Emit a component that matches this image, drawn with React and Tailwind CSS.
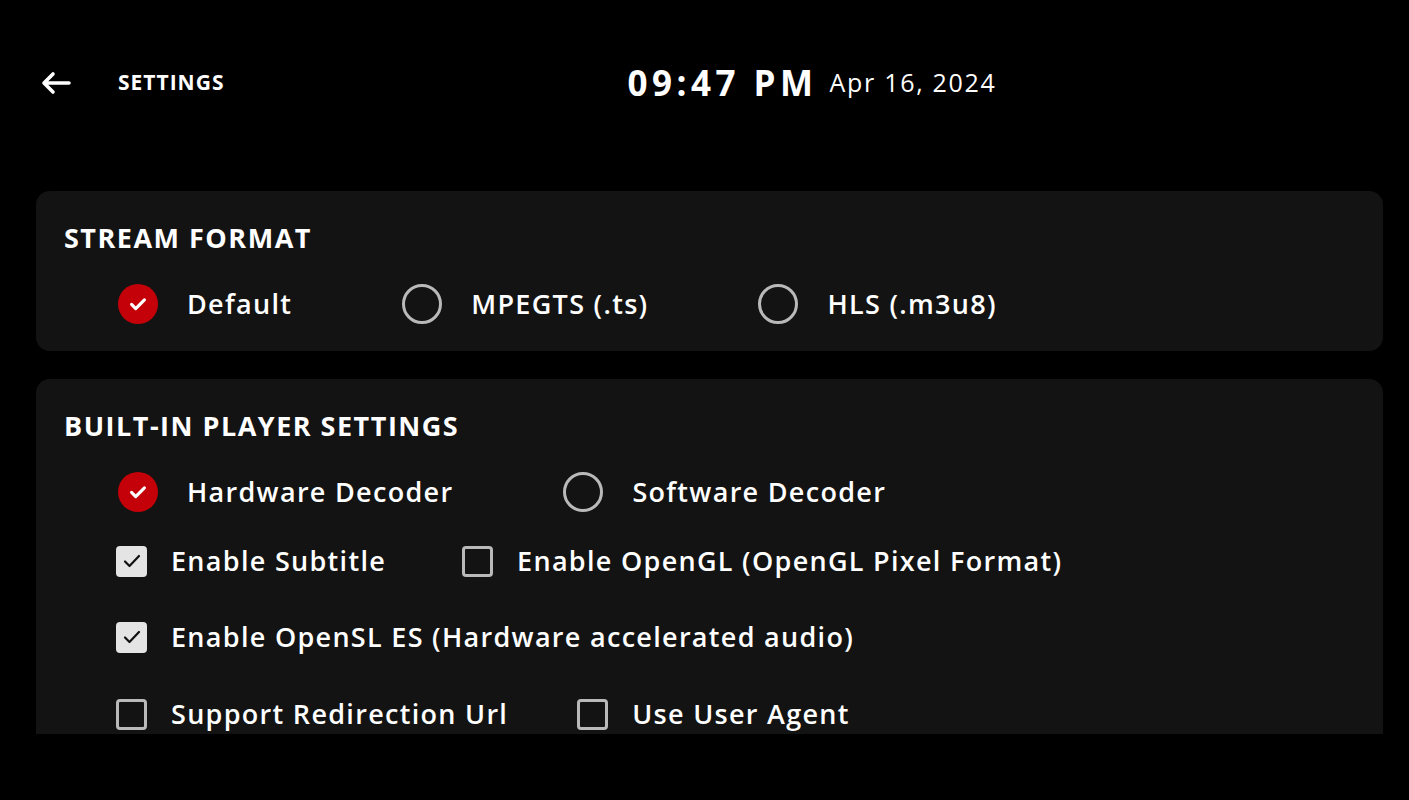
import React from 'react';

const font = { fontFamily: '"Open Sans", "Liberation Sans", sans-serif' };

const RadioOn = () => (
  <span className="flex h-10 w-10 items-center justify-center rounded-full bg-[#c40008]">
    <svg width="22" height="22" viewBox="0 0 24 24" fill="none" stroke="white" strokeWidth="3.4" strokeLinecap="round" strokeLinejoin="round">
      <path d="M5 12.5l4.5 4.5L19 7.5" />
    </svg>
  </span>
);

const RadioOff = () => (
  <span className="block h-10 w-10 rounded-full border-[3px] border-[#b9b9b9]" />
);

const CheckOn = () => (
  <span className="flex h-[31px] w-[31px] items-center justify-center rounded-[4px] bg-[#e4e4e4]">
    <svg width="24" height="24" viewBox="0 0 24 24" fill="none" stroke="#111" strokeWidth="2.2" strokeLinecap="round" strokeLinejoin="round">
      <path d="M5 12.5l4.5 4.5L19 7" />
    </svg>
  </span>
);

const CheckOff = () => (
  <span className="block h-[31px] w-[31px] rounded-[4px] border-[3px] border-[#b9b9b9]" />
);

const Radio = ({ on, label }) => (
  <div className="flex h-10 items-center">
    {on ? <RadioOn /> : <RadioOff />}
    <span className="ml-[29px] text-[27px] font-semibold leading-[34px] tracking-[1.3px] text-white">{label}</span>
  </div>
);

const Check = ({ on, label }) => (
  <div className="flex h-[34px] items-center">
    {on ? <CheckOn /> : <CheckOff />}
    <span className="ml-[24px] text-[27px] font-semibold leading-[34px] tracking-[1.3px] text-white">{label}</span>
  </div>
);

export default function App() {
  return (
    <div className="h-[800px] w-full overflow-hidden bg-black text-white" style={font}>
      {/* Header */}
      <div className="flex h-[164px] items-center pt-[2px]">
        <svg className="ml-[41px]" width="30" height="24" viewBox="0 0 30 24" fill="none" stroke="white" strokeWidth="3.6" strokeLinecap="round" strokeLinejoin="round">
          <path d="M28 12H3M12 3L3 12l9 9" />
        </svg>
        <span className="ml-[47px] text-[21px] font-bold tracking-[1px]">SETTINGS</span>
        <span className="ml-[403px] text-[35px] font-bold tracking-[4.5px]">09:47 PM</span>
        <span className="ml-[12px] text-[25px] font-medium tracking-[1.7px]">Apr 16, 2024</span>
      </div>

      {/* Scroll area */}
      <div className="ml-[36px] mr-[26px] h-[570px] overflow-hidden">
        <div className="flex flex-col gap-[28px] pt-[27px]">
          <div className="rounded-[14px] bg-[#131313] px-[28px] pb-[27px] pt-[30px]">
            <h2 className="text-[27px] font-bold leading-[34px] tracking-[1.5px]">STREAM FORMAT</h2>
            <div className="mt-[29px] flex items-center gap-[110px] pl-[54px]">
              <Radio on label="Default" />
              <Radio label="MPEGTS (.ts)" />
              <Radio label="HLS (.m3u8)" />
            </div>
          </div>

          <div className="rounded-[14px] bg-[#131313] px-[28px] pb-[40px] pt-[30px]">
            <h2 className="text-[27px] font-bold leading-[34px] tracking-[1.5px]">BUILT-IN PLAYER SETTINGS</h2>
            <div className="mt-[29px] flex items-center gap-[110px] pl-[54px]">
              <Radio on label="Hardware Decoder" />
              <Radio label="Software Decoder" />
            </div>
            <div className="mt-[32px] flex items-center gap-[76px] pl-[52px]">
              <Check on label="Enable Subtitle" />
              <Check label="Enable OpenGL (OpenGL Pixel Format)" />
            </div>
            <div className="mt-[42px] flex items-center pl-[52px]">
              <Check on label="Enable OpenSL ES (Hardware accelerated audio)" />
            </div>
            <div className="mt-[43px] flex items-center gap-[69px] pl-[52px]">
              <Check label="Support Redirection Url" />
              <Check label="Use User Agent" />
            </div>
          </div>
        </div>
      </div>
    </div>
  );
}
